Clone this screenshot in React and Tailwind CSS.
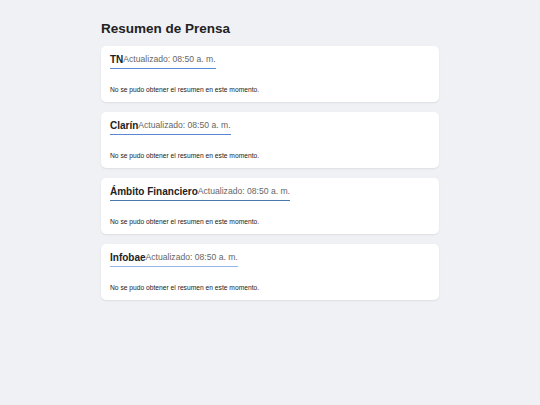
export default function App() {
  const items = [
    { name: "TN", color: "#5b8ad6" },
    { name: "Clarín", color: "#5a86d4" },
    { name: "Ámbito Financiero", color: "#4a78ad" },
    { name: "Infobae", color: "#98b6ee" },
  ];
  return (
    <div className="min-h-[405px] w-full bg-[#f0f1f5]" style={{ fontFamily: '"Liberation Sans", Arial, sans-serif' }}>
      <div className="mx-auto w-[338px] pt-[21px]">
        <h1 className="text-[13.5px] font-bold leading-[16px] text-[#222] mb-[8.5px]">Resumen de Prensa</h1>
        <div className="flex flex-col gap-[9.5px]">
          {items.map((it) => (
            <div key={it.name} className="bg-white rounded-[5px] shadow-[0_1px_2px_rgba(0,0,0,0.08)] px-[9px] pt-[8.5px] pb-[8.5px]">
              <div className="flex w-fit items-start border-b-[1.5px] pb-[1.5px]" style={{ borderColor: it.color }}>
                <span className="text-[10px] font-bold leading-[12px] text-[#222]">{it.name}</span>
                <span className="text-[8.6px] leading-[11px] text-[#666]">Actualizado: 08:50 a. m.</span>
              </div>
              <p className="mt-[17px] text-[6.7px] leading-[8px] text-[#222]">No se pudo obtener el resumen en este momento.</p>
            </div>
          ))}
        </div>
      </div>
    </div>
  );
}
